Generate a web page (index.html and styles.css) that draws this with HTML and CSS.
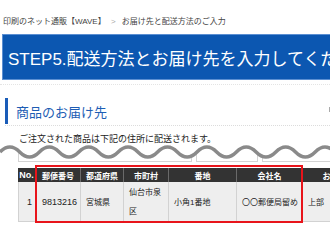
FILE: index.html
```html
<!DOCTYPE html>
<html lang="ja">

<head>
  <meta charset="UTF-8" />
  <meta name="viewport" content="width=device-width, initial-scale=1.0" />
  <title>お届け先と配送方法のご入力</title>
  <link rel="stylesheet" href="styles.css">
</head>

<body>
  <div class="page">
    <div class="breadcrumb">
      <span>印刷のネット通販【WAVE】</span>
      <span class="crumb-sep">&gt;</span>
      <span>お届け先と配送方法のご入力</span>
    </div>

    <h1 class="step-title">STEP5.配送方法とお届け先を入力してください</h1>

    <div class="rule"></div>

    <div class="section-head">
      <h2 class="section-title">商品のお届け先</h2>
      <span class="edge-mark"></span>
    </div>

    <p class="lead">ご注文された商品は下記の住所に配送されます。</p>

    <!-- cut: previous rows hidden behind the wave -->
    <div class="cut">
      <div class="cut-boxes">
        <div class="cut-box box-wide"></div>
        <div class="cut-box box-mid"></div>
        <div class="cut-box box-rest"></div>
      </div>
      <svg class="wave" width="330" height="16" viewBox="0 0 330 16">
        <path fill="#fff" d="M0 7 q9.85 -10 19.7 0 t19.7 0 t19.7 0 t19.7 0 t19.7 0 t19.7 0 t19.7 0 t19.7 0 t19.7 0 t19.7 0 t19.7 0 t19.7 0 t19.7 0 t19.7 0 t19.7 0 t19.7 0 t19.7 0 L335 0 L0 0 Z" />
        <path fill="none" stroke="#8a8a8a" stroke-width="3.5" d="M0 7 q9.85 -10 19.7 0 t19.7 0 t19.7 0 t19.7 0 t19.7 0 t19.7 0 t19.7 0 t19.7 0 t19.7 0 t19.7 0 t19.7 0 t19.7 0 t19.7 0 t19.7 0 t19.7 0 t19.7 0 t19.7 0" />
      </svg>
    </div>

    <div class="address-wrap">
      <div class="address">
        <div class="cell head no">No.</div>
        <div class="cell head">郵便番号</div>
        <div class="cell head">都道府県</div>
        <div class="cell head">市町村</div>
        <div class="cell head">番地</div>
        <div class="cell head">会社名</div>
        <div class="cell head">お届け先名</div>

        <div class="cell data num">1</div>
        <div class="cell data digits">9813216</div>
        <div class="cell data">宮城県</div>
        <div class="cell data wrap">仙台市泉区</div>
        <div class="cell data">小角1番地</div>
        <div class="cell data">〇〇郵便局留め</div>
        <div class="cell data">上部</div>
      </div>
      <div class="highlight"></div>
    </div>
  </div>
</body>

</html>
```

FILE: styles.css
```css
* {
  box-sizing: border-box;
}

html,
body {
  margin: 0;
  width: 100%;
  height: 100%;
  overflow: hidden;
  background: #fff;
}

body {
  font-family: "Liberation Sans", "Noto Sans CJK JP", sans-serif;
  color: #222;
}

.page {
  width: 330px;
}

.breadcrumb {
  height: 34px;
  padding: 17px 0 0 3px;
  font-size: 8px;
  line-height: 10px;
  color: #444;
  white-space: nowrap;
}

.crumb-sep {
  color: #aaa;
  margin: 0 4px 0 3px;
}

.step-title {
  margin: 0 0 0 2px;
  height: 46px;
  padding-left: 5px;
  display: flex;
  align-items: center;
  background: #0c57b1;
  border: 1px solid #5b8fd2;
  border-right: none;
  color: #fff;
  font-size: 17px;
  font-weight: normal;
  white-space: nowrap;
  overflow: hidden;
}

.rule {
  margin-top: 4px;
  border-top: 1px dotted #e4e4e4;
}

.section-head {
  margin: 13px 0 0 5px;
  display: flex;
  justify-content: space-between;
  align-items: center;
  border-bottom: 1px dotted #dcdcdc;
  padding-bottom: 1px;
}

.section-title {
  margin: 0;
  height: 26px;
  padding-left: 8px;
  display: flex;
  align-items: center;
  border-left: 3px solid #1a5cb8;
  color: #1d5db4;
  font-size: 13px;
  font-weight: normal;
}

.edge-mark {
  width: 1px;
  height: 5px;
  margin-bottom: 4px;
  background: #aaa;
}

.lead {
  margin: 8px 0 0 19px;
  font-size: 9px;
  line-height: 10px;
  color: #222;
  white-space: nowrap;
}

.cut {
  position: relative;
  height: 17px;
  margin-top: 1px;
}

.cut-boxes {
  display: flex;
  gap: 4px;
  height: 17px;
  margin-left: 18px;
}

.cut-box {
  border: 1px solid #d4d4d4;
  background: #fff;
}

.box-wide {
  width: 174px;
}

.box-mid {
  width: 62px;
}

.box-rest {
  flex: 1;
  border-right: none;
}

.wave {
  position: absolute;
  top: 0;
  left: 0;
}

.address-wrap {
  position: relative;
  margin: 6px 0 0 18px;
}

.address {
  display: grid;
  grid-template-columns: 17px 45px 43px 45px 68px 66px 80px;
  grid-template-rows: 14px 40px;
}

.cell {
  display: flex;
  align-items: center;
  font-size: 8px;
  white-space: nowrap;
  overflow: hidden;
}

.head {
  justify-content: center;
  background: #333;
  color: #fff;
  font-weight: bold;
  border-left: 1px solid #6a6a6a;
}

.head.no {
  border-left: none;
  font-size: 9px;
}

.data {
  padding: 0 4px 0 5px;
  background: #eee;
  color: #222;
  border-left: 1px solid #d2d2d2;
  border-bottom: 1px solid #d2d2d2;
}

.data.num {
  justify-content: flex-end;
  padding-right: 3px;
  font-size: 9px;
}

.data.digits {
  padding-left: 6px;
  font-size: 9px;
}

.data.wrap {
  white-space: normal;
  line-height: 19px;
}

.highlight {
  position: absolute;
  top: -3px;
  left: 17px;
  width: 268px;
  height: 58px;
  border: 2px solid #e8141b;
}
```
